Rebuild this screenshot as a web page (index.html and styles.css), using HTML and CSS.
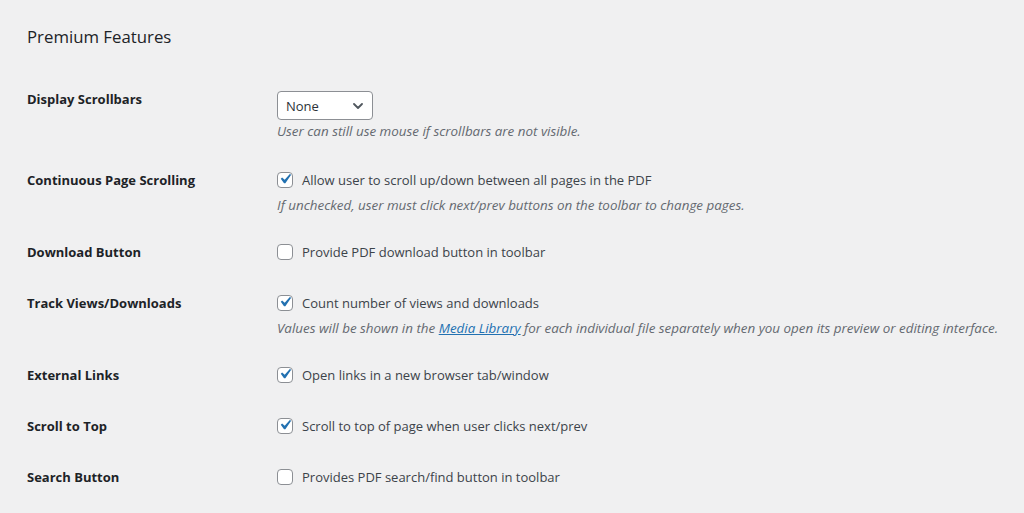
FILE: index.html
```html
<!DOCTYPE html>
<html lang="en">
<head>
<meta charset="utf-8">
<title>Premium Features</title>
<link rel="stylesheet" href="styles.css">
</head>
<body>
<div class="wrap">
  <h2 class="title">Premium Features</h2>

  <div class="row row-select">
    <div class="label">Display Scrollbars</div>
    <div class="field">
      <div class="select">
        <span class="select-value">None</span>
        <svg class="chev" width="10" height="6" viewBox="0 0 10 6"><path d="M1 1l4 4 4-4" fill="none" stroke="#50575e" stroke-width="1.8" stroke-linecap="round" stroke-linejoin="round"/></svg>
      </div>
      <p class="desc desc-tight">User can still use mouse if scrollbars are not visible.</p>
    </div>
  </div>

  <div class="row has-desc">
    <div class="label">Continuous Page Scrolling</div>
    <div class="field">
      <div class="check-line">
        <span class="cb"><svg viewBox="0 0 20 20" width="20" height="20"><path d="M14.83 4.89l1.34.94-5.81 8.38H9.02L5.780 9.67l1.34-1.25 2.57 2.4z" fill="#2271b1"/></svg></span>
        <span class="cb-text">Allow user to scroll up/down between all pages in the PDF</span>
      </div>
      <p class="desc">If unchecked, user must click next/prev buttons on the toolbar to change pages.</p>
    </div>
  </div>

  <div class="row">
    <div class="label">Download Button</div>
    <div class="field">
      <div class="check-line">
        <span class="cb"></span>
        <span class="cb-text">Provide PDF download button in toolbar</span>
      </div>
    </div>
  </div>

  <div class="row has-desc">
    <div class="label">Track Views/Downloads</div>
    <div class="field">
      <div class="check-line">
        <span class="cb"><svg viewBox="0 0 20 20" width="20" height="20"><path d="M14.83 4.89l1.34.94-5.81 8.38H9.02L5.78 9.67l1.34-1.25 2.57 2.4z" fill="#2271b1"/></svg></span>
        <span class="cb-text">Count number of views and downloads</span>
      </div>
      <p class="desc">Values will be shown in the <a href="#">Media Library</a> for each individual file separately when you open its preview or editing interface.</p>
    </div>
  </div>

  <div class="row">
    <div class="label">External Links</div>
    <div class="field">
      <div class="check-line">
        <span class="cb"><svg viewBox="0 0 20 20" width="20" height="20"><path d="M14.83 4.89l1.34.94-5.81 8.38H9.02L5.78 9.67l1.34-1.25 2.57 2.4z" fill="#2271b1"/></svg></span>
        <span class="cb-text">Open links in a new browser tab/window</span>
      </div>
    </div>
  </div>

  <div class="row">
    <div class="label">Scroll to Top</div>
    <div class="field">
      <div class="check-line">
        <span class="cb"><svg viewBox="0 0 20 20" width="20" height="20"><path d="M14.83 4.89l1.34.94-5.81 8.38H9.02L5.78 9.67l1.34-1.25 2.57 2.4z" fill="#2271b1"/></svg></span>
        <span class="cb-text">Scroll to top of page when user clicks next/prev</span>
      </div>
    </div>
  </div>

  <div class="row">
    <div class="label">Search Button</div>
    <div class="field">
      <div class="check-line">
        <span class="cb"></span>
        <span class="cb-text">Provides PDF search/find button in toolbar</span>
      </div>
    </div>
  </div>
</div>
</body>
</html>
```

FILE: styles.css
```css
html, body {
  margin: 0;
  padding: 0;
  background: #f0f0f1;
}

body {
  font-family: "Open Sans", "Noto Sans", sans-serif;
  color: #3c434a;
  font-size: 13px;
}

.wrap {
  padding: 25px 0 0 27px;
}

.title {
  margin: 0 0 24px 0;
  font-size: 16.8px;
  line-height: 24px;
  font-weight: 500;
  color: #1d2327;
}

.row {
  display: grid;
  grid-template-columns: 250px 1fr;
  padding: 16px 0 15px 0;
}

.row.has-desc {
  padding-bottom: 11px;
}

.row.row-select {
  padding-bottom: 13px;
}

.label {
  font-weight: 700;
  font-size: 13px;
  line-height: 20px;
  color: #1d2327;
}

.field {
  min-width: 0;
}

.check-line {
  display: flex;
  align-items: center;
  gap: 9px;
  height: 20px;
}

.cb {
  box-sizing: border-box;
  width: 16px;
  height: 16px;
  border: 1px solid #8c8f94;
  border-radius: 4px;
  background: #fff;
  display: flex;
  align-items: center;
  justify-content: center;
  overflow: visible;
  flex: none;
}

.cb svg {
  flex: none;
  margin: -2px -3px 0 -3px;
}

.cb-text {
  line-height: 20px;
  white-space: nowrap;
}

.select {
  box-sizing: border-box;
  margin-top: 2px;
  width: 96px;
  height: 29px;
  border: 1px solid #8c8f94;
  border-radius: 4px;
  background: #fff;
  display: flex;
  align-items: center;
  justify-content: space-between;
  padding: 1px 9px 0 8px;
  color: #2c3338;
}

.select-value {
  line-height: 20px;
}

.desc {
  margin: 5px 0 0 0;
  font-style: italic;
  font-size: 13.4px;
  line-height: 20px;
  color: #646970;
  white-space: nowrap;
}

.desc.desc-tight {
  margin-top: 1px;
}

.desc a {
  color: #2271b1;
  text-decoration: underline;
}
```
